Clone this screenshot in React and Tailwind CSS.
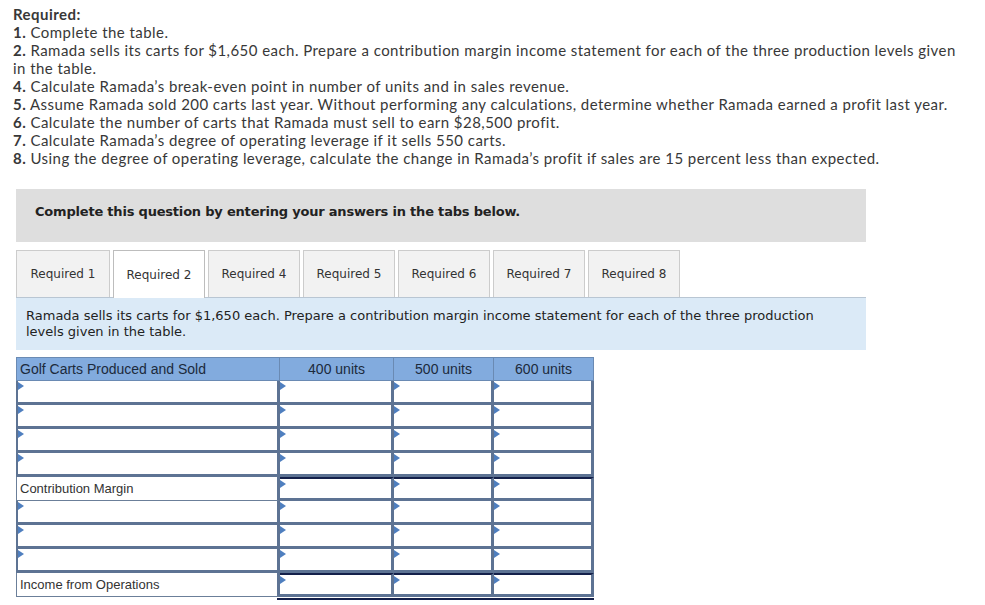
import React from 'react';

const items = [
  ['1.', 'Complete the table.'],
  ['2.', 'Ramada sells its carts for $1,650 each. Prepare a contribution margin income statement for each of the three production levels given in the table.'],
  ['4.', 'Calculate Ramada’s break-even point in number of units and in sales revenue.'],
  ['5.', 'Assume Ramada sold 200 carts last year. Without performing any calculations, determine whether Ramada earned a profit last year.'],
  ['6.', 'Calculate the number of carts that Ramada must sell to earn $28,500 profit.'],
  ['7.', 'Calculate Ramada’s degree of operating leverage if it sells 550 carts.'],
  ['8.', 'Using the degree of operating leverage, calculate the change in Ramada’s profit if sales are 15 percent less than expected.'],
];

const tabs = ['Required 1', 'Required 2', 'Required 4', 'Required 5', 'Required 6', 'Required 7', 'Required 8'];

// row kinds: input = all inputs, label = text label + inputs
const rows = [
  { kind: 'input' },
  { kind: 'input' },
  { kind: 'input' },
  { kind: 'input' },
  { kind: 'label', text: 'Contribution Margin', topRule: true },
  { kind: 'input' },
  { kind: 'input' },
  { kind: 'input' },
  { kind: 'label', text: 'Income from Operations', topRule: true, double: true },
];

const Marker = () => (
  <span className="absolute left-0 top-[1px] w-0 h-0 border-y-[4px] border-y-transparent border-l-[6px] border-l-[#4f7fbf]" />
);

const InputCell = ({ w, topRule, double }) => (
  <div
    className={
      'relative h-[24px] bg-white border-r-[3px] border-b-[3px] border-[#5d7393] ' +
      w +
      (topRule ? ' border-t-2 border-t-[#14204a]' : '')
    }
  >
    <Marker />
    {double && <div className="absolute left-[-3px] right-[-3px] bottom-[-6px] h-[2px] bg-[#14204a]" />}
  </div>
);

const App = () => {
  return (
    <div className="w-[985px] h-[605px] bg-white overflow-hidden text-[#383838]" style={{ fontFamily: 'Lato, "Open Sans", sans-serif' }}>
      <div className="pl-[13px] pr-[21px] pt-[5px] text-[15px] leading-[18px] tracking-[0.45px] w-[985px]">
        <div className="font-bold">Required:</div>
        {items.map(([n, t]) => (
          <div key={n}>
            <span className="font-bold">{n}</span> {t}
          </div>
        ))}
      </div>

      <div className="ml-[16px] w-[850px]" style={{ fontFamily: '"DejaVu Sans", Verdana, sans-serif' }}>
        <div className="mt-[22px] h-[53px] bg-[#dedede] flex items-center pl-[19px] pb-[8px]">
          <span className="font-bold text-[13px] text-[#222] tracking-[-0.2px]">Complete this question by entering your answers in the tabs below.</span>
        </div>

        <div className="mt-[8px] flex gap-[3px] h-[47px] items-end">
          {tabs.map((t, i) => (
            <div
              key={t}
              className={
                'flex items-center justify-center text-[12px] text-[#333] border border-b-0 ' +
                (i === 0 ? 'w-[94px] ' : 'w-[92px] ') +
                (i === 1 ? 'h-[48px] bg-white border-[#bdbdbd] relative z-10 -mb-px' : 'h-[47px] bg-[#f2f2f2] border-[#cccccc]')
              }
            >
              {t}
            </div>
          ))}
        </div>

        <div className="h-[53px] bg-[#dbeaf7] border-t border-[#b9c6d3] pl-[10px] pr-[40px] pt-[10px] text-[13px] leading-[16px] text-[#222]">
          Ramada sells its carts for $1,650 each. Prepare a contribution margin income statement for each of the three production levels given in the table.
        </div>
      </div>

      <div className="ml-[16px] mt-[7px] w-[578px] text-[13px]" style={{ fontFamily: '"Liberation Sans", Arial, sans-serif' }}>
        <div className="flex h-[24px] bg-[#82abde] border border-[#6a8ab3] text-[#1c2a3c] text-[14px]">
          <div className="w-[263px] border-r border-[#6a8ab3] pl-[3px] flex items-center">Golf Carts Produced and Sold</div>
          <div className="w-[114px] border-r border-[#6a8ab3] flex items-center justify-center">400 units</div>
          <div className="w-[100px] border-r border-[#6a8ab3] flex items-center justify-center">500 units</div>
          <div className="flex-1 flex items-center justify-center">600 units</div>
        </div>

        {rows.map((r, i) => (
          <div key={i} className="flex">
            {r.kind === 'input' ? (
              <div className="relative w-[264px] h-[24px] bg-white border-l-2 border-r-[3px] border-b-[3px] border-[#5d7393]">
                <Marker />
              </div>
            ) : (
              <div className="w-[264px] h-[24px] bg-white border-l border-r-[3px] border-b border-[#6b7f99] border-r-[#5d7393] pl-[3px] flex items-center text-[#333]">
                {r.text}
              </div>
            )}
            <InputCell w="w-[114px]" topRule={r.topRule} double={r.double} />
            <InputCell w="w-[100px]" topRule={r.topRule} double={r.double} />
            <InputCell w="w-[100px]" topRule={r.topRule} double={r.double} />
          </div>
        ))}
      </div>
    </div>
  );
};

export default App;
